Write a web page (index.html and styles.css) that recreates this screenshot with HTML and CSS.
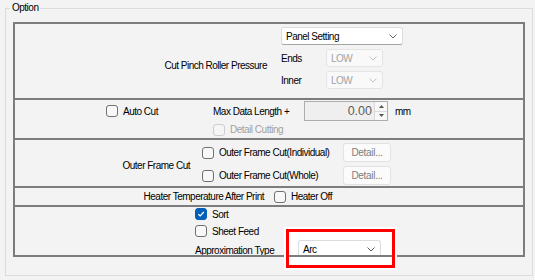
FILE: index.html
```html
<!DOCTYPE html>
<html>
<head>
	<title>Option</title>
	<link rel="stylesheet" href="styles.css">
</head>
<body>
	<fieldset class="group">
		<legend>Option</legend>
		<div class="table">
			<div class="row row-pinch">
				<div class="row-label">Cut Pinch Roller Pressure</div>
				<div class="pinch-ctrls">
					<div class="combo combo-panel">
						<span>Panel Setting</span>
						<svg class="chev" width="8" height="5" viewBox="0 0 8 5"><polyline points="0.5,0.5 4,4 7.5,0.5"/></svg>
					</div>
					<div class="sub">
						<span class="sub-label">Ends</span>
						<div class="combo combo-low disabled">
							<span>LOW</span>
							<svg class="chev" width="8" height="5" viewBox="0 0 8 5"><polyline points="0.5,0.5 4,4 7.5,0.5"/></svg>
						</div>
					</div>
					<div class="sub">
						<span class="sub-label">Inner</span>
						<div class="combo combo-low disabled">
							<span>LOW</span>
							<svg class="chev" width="8" height="5" viewBox="0 0 8 5"><polyline points="0.5,0.5 4,4 7.5,0.5"/></svg>
						</div>
					</div>
				</div>
			</div>

			<div class="row row-auto">
				<label class="check"><span class="box"></span>Auto Cut</label>
				<span class="field-label">Max Data Length +</span>
				<div class="numeric">
					<span class="num-val">0.00</span>
					<span class="spin">
						<span class="spin-btn"><svg width="5" height="3" viewBox="0 0 5 3"><polygon points="0,3 2.5,0 5,3"/></svg></span>
						<span class="spin-btn"><svg width="5" height="3" viewBox="0 0 5 3"><polygon points="0,0 2.5,3 5,0"/></svg></span>
					</span>
				</div>
				<span class="unit">mm</span>
				<label class="check disabled detail-cut"><span class="box"></span>Detail Cutting</label>
			</div>

			<div class="row row-frame">
				<div class="row-label">Outer Frame Cut</div>
				<label class="check"><span class="box"></span>Outer Frame Cut(Individual)</label>
				<button class="detail-btn">Detail...</button>
				<label class="check"><span class="box"></span>Outer Frame Cut(Whole)</label>
				<button class="detail-btn">Detail...</button>
			</div>

			<div class="row row-heater">
				<div class="row-label">Heater Temperature After Print</div>
				<label class="check"><span class="box"></span>Heater Off</label>
			</div>

			<div class="row row-sort">
				<label class="check"><span class="box checked"><svg width="8" height="8" viewBox="0 0 8 8"><polyline points="1.3,4.2 3.2,6 6.8,2"/></svg></span>Sort</label>
				<label class="check sheet"><span class="box"></span>Sheet Feed</label>
				<div class="approx">
					<span class="approx-label">Approximation Type</span>
					<div class="combo combo-arc">
						<span>Arc</span>
						<svg class="chev" width="8" height="5" viewBox="0 0 8 5"><polyline points="0.5,0.5 4,4 7.5,0.5"/></svg>
					</div>
				</div>
			</div>
		</div>
	</fieldset>

	<div class="mark"></div>
</body>
</html>
```

FILE: styles.css
```css
html{
	background: #f3f3f3;
}
body{
	margin: 0;
	width: 535px;
	height: 280px;
	overflow: hidden;
	font-family: "Liberation Sans", Arial, sans-serif;
	font-size: 10px;
	letter-spacing: -0.5px;
	color: #000;
}
.group{
	box-sizing: border-box;
	margin: 2px 0 0 5px;
	padding: 0 7px;
	width: 528px;
	height: 274px;
	border: 1px solid #dcdcdc;
}
.group legend{
	margin-left: -3px;
	padding: 0 2px;
	line-height: 12px;
	font-size: 10px;
}
.table{
	margin-top: 8px;
	border: 2px solid #7c7c7c;
	display: flex;
	flex-direction: column;
}
.row{
	border-bottom: 2px solid #7c7c7c;
	overflow: hidden;
}
.row:last-child{
	border-bottom: none;
}
.row-label{
	text-align: right;
}

/* row 1 */
.row-pinch{
	height: 74px;
	display: grid;
	grid-template-columns: 252px auto;
	column-gap: 13px;
}
.row-pinch .row-label{
	align-self: center;
	padding-top: 8px;
}
.pinch-ctrls{
	padding-top: 3px;
	display: flex;
	flex-direction: column;
	gap: 4px;
}
.sub{
	display: flex;
	align-items: center;
}
.sub-label{
	width: 45px;
	padding-left: 1px;
}
.combo{
	box-sizing: border-box;
	height: 18px;
	display: flex;
	align-items: center;
	justify-content: space-between;
	padding: 0 5px 0 4px;
	background: #fff;
	border: 1px solid #dcdcdc;
	border-bottom-color: #a4a4a4;
	border-radius: 3px;
}
.chev polyline{
	fill: none;
	stroke: #626262;
	stroke-width: 1;
}
.combo-panel{
	width: 122px;
	margin-left: 1px;
}
.combo-low{
	width: 57px;
}
.combo.disabled{
	background: #f9f9f9;
	border-color: #e4e4e4;
	color: #a2a2a2;
}
.combo.disabled .chev polyline{
	stroke: #c4c4c4;
}

/* checkboxes */
.check{
	display: flex;
	align-items: center;
	gap: 5px;
	white-space: nowrap;
}
.box{
	box-sizing: border-box;
	width: 12px;
	height: 12px;
	border: 1px solid #707070;
	border-radius: 3px;
	background: #f8f8f8;
	display: flex;
	align-items: center;
	justify-content: center;
}
.box.checked{
	background: #005fb8;
	border-color: #005fb8;
}
.box.checked polyline{
	fill: none;
	stroke: #fff;
	stroke-width: 1.2;
}
.check.disabled{
	color: #a2a2a2;
}
.check.disabled .box{
	border-color: #cdcdcd;
	background: #f5f5f5;
}

/* row 2 */
.row-auto{
	height: 37px;
	padding: 1px 0 0 91px;
	display: grid;
	grid-template-columns: 107px 91px 84px auto;
	grid-template-rows: 20px 17px;
	align-items: center;
}
.numeric{
	box-sizing: border-box;
	height: 20px;
	display: flex;
	align-items: center;
	justify-content: flex-end;
	border: 1px solid #adadad;
	background: #efefef;
}
.num-val{
	font-size: 12.5px;
	letter-spacing: 0;
	color: #5c5c5c;
	padding-right: 2px;
}
.spin{
	box-sizing: border-box;
	width: 13px;
	height: 18px;
	display: flex;
	flex-direction: column;
	border-left: 1px solid #dadada;
	background: #f8f8f8;
}
.spin-btn{
	flex: 1;
	display: flex;
	align-items: center;
	justify-content: center;
}
.spin-btn + .spin-btn{
	border-top: 1px solid #dadada;
}
.spin-btn polygon{
	fill: #555;
}
.unit{
	margin-left: 7px;
}
.detail-cut{
	grid-column: 2 / 5;
	grid-row: 2;
}

/* row 3 */
.row-frame{
	height: 43px;
	padding-top: 3px;
	display: grid;
	grid-template-columns: 187px 141px 48px;
	grid-template-rows: 19px 19px;
	row-gap: 4px;
	align-items: center;
}
.row-frame .row-label{
	grid-row: 1 / 3;
	padding: 2px 12px 0 0;
}
.detail-btn{
	box-sizing: border-box;
	width: 48px;
	height: 19px;
	padding: 0;
	font-family: inherit;
	font-size: 10px;
	letter-spacing: -0.3px;
	color: #7b7b7b;
	background: #fbfbfb;
	border: 1px solid #e2e2e2;
	border-radius: 3px;
}

/* row 4 */
.row-heater{
	height: 17px;
	display: grid;
	grid-template-columns: 259px auto;
	align-items: center;
}
.row-heater .row-label{
	padding-right: 10px;
}

/* row 5 */
.row-sort{
	height: 48px;
	padding-left: 180px;
	display: flex;
	flex-direction: column;
}
.row-sort .check{
	margin-top: 1px;
}
.row-sort .sheet{
	margin-top: 5px;
}
.approx{
	margin-top: 3px;
	display: flex;
	align-items: center;
}
.approx-label{
	width: 103px;
	padding-top: 2px;
}
.combo-arc{
	width: 83px;
}

/* annotation */
.mark{
	position: absolute;
	left: 286px;
	top: 229px;
	box-sizing: border-box;
	width: 109px;
	height: 39px;
	border: 3px solid #f00;
	outline: 2px solid #fff;
}
.mark::before{
	content: '';
	position: absolute;
	inset: 0;
	background: #fff;
	z-index: -1;
}
```
